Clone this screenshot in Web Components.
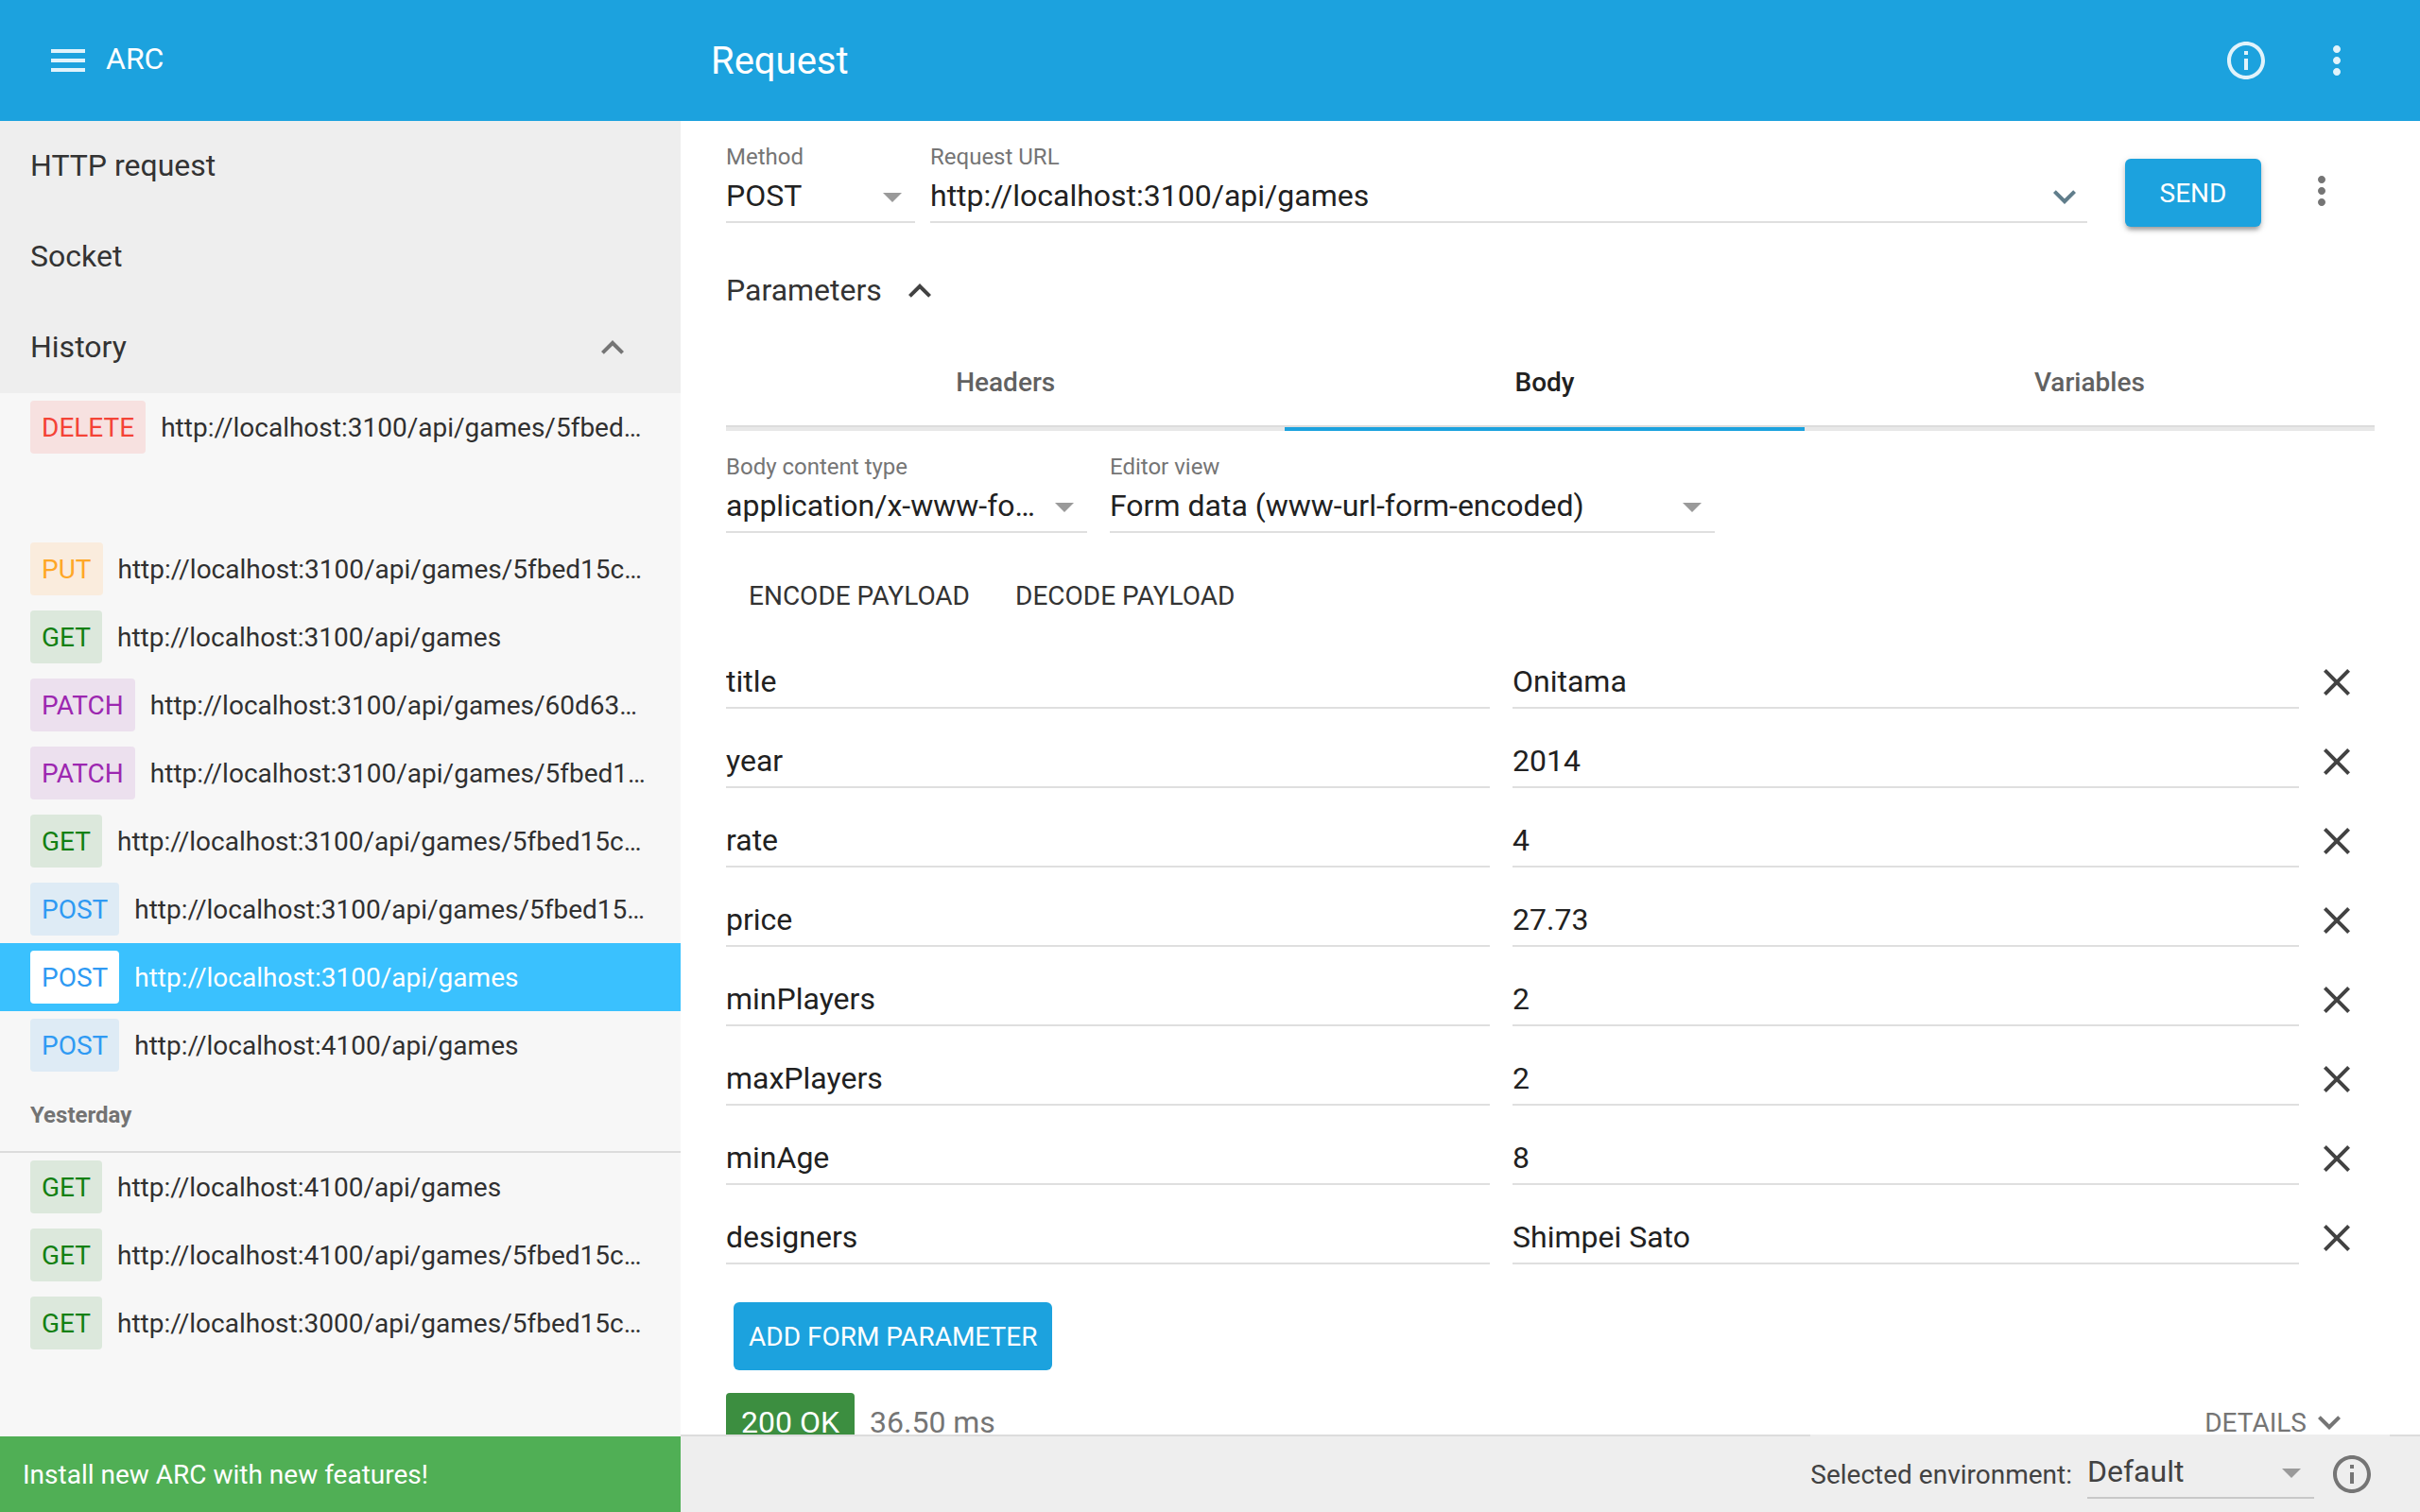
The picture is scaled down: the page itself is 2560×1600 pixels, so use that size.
<!DOCTYPE html>
<html lang="en">
<head>
<meta charset="utf-8">
<title>ARC - Request</title>
<style>
  html, body { margin: 0; height: 100%; }
  body {
    --primary: #1ca2de;
    --line: #dfdfdf;
    --muted: #757575;
    font-family: Roboto, "Liberation Sans", sans-serif;
    font-size: 32px;
    color: #212121;
    background: #fff;
    overflow: hidden;
  }
</style>
</head>
<body>
<arc-app></arc-app>

<script>
const ICONS = {
  menu: 'M3 18h18v-2H3v2zm0-5h18v-2H3v2zm0-7v2h18V6H3z',
  info: 'M11 17h2v-6h-2v6zm1-15C6.48 2 2 6.48 2 12s4.48 10 10 10 10-4.48 10-10S17.52 2 12 2zm0 18c-4.41 0-8-3.59-8-8s3.59-8 8-8 8 3.59 8 8-3.59 8-8 8zM11 9h2V7h-2v2z',
  more: 'M12 8c1.1 0 2-.9 2-2s-.9-2-2-2-2 .9-2 2 .9 2 2 2zm0 2c-1.1 0-2 .9-2 2s.9 2 2 2 2-.9 2-2-.9-2-2-2zm0 6c-1.1 0-2 .9-2 2s.9 2 2 2 2-.9 2-2-.9-2-2-2z',
  less: 'M12 8l-6 6 1.41 1.41L12 10.83l4.59 4.58L18 14z',
  expand: 'M16.59 8.59L12 13.17 7.41 8.59 6 10l6 6 6-6z',
  drop: 'M7 10l5 5 5-5z',
  close: 'M19 6.41L17.59 5 12 10.59 6.41 5 5 6.41 10.59 12 5 17.59 6.41 19 12 13.41 17.59 19 19 17.59 13.41 12z'
};

const RESET = `
  *, *::before, *::after { box-sizing: border-box; }
  button, input, select {
    font: inherit; color: inherit; background: none; border: 0; margin: 0; padding: 0;
    border-radius: 0; outline: 0; appearance: none;
  }
  button { cursor: pointer; }
  a { color: inherit; text-decoration: none; }
`;

class ArcElement extends HTMLElement {
  connectedCallback() {
    if (this.shadowRoot) return;
    const root = this.attachShadow({ mode: 'open' });
    root.innerHTML = `<style>${RESET}${this.styles()}</style>${this.markup()}`;
  }
  attr(name) { return this.getAttribute(name) || ''; }
  styles() { return ''; }
  markup() { return '<slot></slot>'; }
}

customElements.define('arc-icon', class extends ArcElement {
  styles() { return `
    :host { display: block; flex: none; width: 48px; height: 48px; }
    svg { display: block; width: 100%; height: 100%; fill: currentColor; }`; }
  markup() { return `<svg viewBox="0 0 24 24" aria-hidden="true"><path d="${ICONS[this.attr('name')]}"/></svg>`; }
});

customElements.define('arc-icon-button', class extends ArcElement {
  styles() { return `
    :host { display: block; flex: none; }
    button { display: block; padding: 16px; }`; }
  markup() { return `<button type="button" aria-label="${this.attr('label')}"><arc-icon name="${this.attr('icon')}"></arc-icon></button>`; }
});

customElements.define('arc-button', class extends ArcElement {
  styles() { return `
    :host { display: block; flex: none; font-size: 28px; color: #333; }
    button { display: block; width: 100%; height: 72px; padding: 0 16px; border-radius: 6px; text-transform: uppercase; white-space: nowrap; }
    :host([filled]) button { background: var(--primary); color: #fff; }
    :host([raised]) button { box-shadow: 0 4px 4px rgba(0,0,0,.16), 0 2px 8px rgba(0,0,0,.14), 0 6px 4px -4px rgba(0,0,0,.2); }`; }
  markup() { return `<button type="button"><slot></slot></button>`; }
});

const FIELD = `
  :host { display: block; min-width: 0; }
  label { display: block; font-size: 24px; line-height: 32px; color: var(--muted); white-space: nowrap; }
  .box { display: grid; padding-bottom: 2px; border-bottom: 2px solid var(--field-line, var(--line)); }
  .box > * { grid-area: 1 / 1; }
  input, select { display: block; width: 100%; min-width: 0; height: 50px; }
  .icon { justify-self: end; align-self: end; pointer-events: none; }
`;

customElements.define('arc-select', class extends ArcElement {
  styles() { return FIELD + `
    select { padding-right: 48px; overflow: hidden; text-overflow: ellipsis; white-space: nowrap; }
    .icon { color: #9a9a9a; }`; }
  markup() {
    const label = this.attr('label');
    return `${label ? `<label for="s">${label}</label>` : ''}
      <div class="box"><select id="s" ${label ? '' : `aria-label="${this.attr('name')}"`}><option>${this.attr('value')}</option></select>
      <arc-icon class="icon" name="drop"></arc-icon></div>`;
  }
});

customElements.define('arc-input', class extends ArcElement {
  styles() { return FIELD + `.icon { color: #607d8b; }`; }
  markup() {
    const label = this.attr('label'), icon = this.attr('icon');
    return `${label ? `<label for="i">${label}</label>` : ''}
      <div class="box"><input id="i" type="text" value="${this.attr('value')}" ${label ? '' : `aria-label="${this.attr('name')}"`}>
      ${icon ? `<arc-icon class="icon" name="${icon}"></arc-icon>` : ''}</div>`;
  }
});

customElements.define('arc-header', class extends ArcElement {
  styles() { return `
    :host { display: flex; align-items: center; height: 128px; background: var(--primary); color: #fff; }
    .brand { display: flex; align-items: center; flex: none; width: var(--drawer); padding-left: 32px; }
    .brand span { line-height: 48px; padding-bottom: 4px; }
    h1 { flex: 1; margin: 0; padding-left: 32px; font-size: 40px; font-weight: 400; }
    .actions { display: flex; gap: 16px; padding-right: 48px; }
    arc-icon-button { color: rgba(255,255,255,.87); }`; }
  markup() { return `
    <div class="brand"><arc-icon-button icon="menu" label="Menu"></arc-icon-button><span>ARC</span></div>
    <h1>Request</h1>
    <div class="actions">
      <arc-icon-button icon="info" label="About"></arc-icon-button>
      <arc-icon-button icon="more" label="More options"></arc-icon-button>
    </div>`; }
});

customElements.define('arc-nav-item', class extends ArcElement {
  styles() { return `
    :host { display: block; background: #eee; color: #333; }
    a { display: flex; align-items: center; justify-content: space-between; height: 96px; padding: 0 48px 0 32px; }
    span { padding-bottom: 2px; }
    arc-icon { color: #757575; }`; }
  markup() { return `<a href="#"><span><slot></slot></span>${this.hasAttribute('open') ? '<arc-icon name="less"></arc-icon>' : ''}</a>`; }
});

customElements.define('arc-history-item', class extends ArcElement {
  styles() { return `
    :host { display: block; font-size: 28px; color: #303030; }
    a { display: flex; align-items: center; gap: 16px; height: 72px; padding: 0 32px; }
    .method { flex: none; padding: 2px 12px 0; line-height: 54px; border-radius: 4px; }
    .url { min-width: 0; overflow: hidden; text-overflow: ellipsis; white-space: nowrap; }
    .GET { background: #dce8dc; color: #128012; }
    .POST { background: #deebf5; color: #2f9af3; }
    .PUT { background: #faecdd; color: #ffa726; }
    .PATCH { background: #ece0ee; color: #9c27b0; }
    .DELETE { background: #f7e1e0; color: #f44336; }
    :host([selected]) { background: #3ac1fe; color: #fff; }
    :host([selected]) .method { background: #fff; }`; }
  markup() {
    const m = this.attr('method');
    return `<a href="#"><span class="method ${m}">${m}</span><span class="url"><slot></slot></span></a>`;
  }
});

customElements.define('arc-drawer', class extends ArcElement {
  styles() { return `
    :host { display: flex; flex-direction: column; min-height: 0; background: #f7f7f7; }
    nav { flex: 1; min-height: 0; overflow: hidden; }
    h2 { margin: 0; padding: 0 32px; height: 78px; line-height: 76px; font-size: 24px; font-weight: 700; color: #737373; border-bottom: 2px solid #dcdcdc; }
    h2.blank { border-color: transparent; }
    .promo { flex: none; display: block; padding: 2px 24px 0; line-height: 78px; font-size: 28px; background: #50af55; color: #fff; }`; }
  markup() {
    const row = (m, u, s) => `<arc-history-item method="${m}" ${s ? 'selected' : ''}>http://localhost:${u}</arc-history-item>`;
    return `
    <nav>
      <arc-nav-item>HTTP request</arc-nav-item>
      <arc-nav-item>Socket</arc-nav-item>
      <arc-nav-item open>History</arc-nav-item>
      ${row('DELETE', '3100/api/games/5fbed…')}
      <h2 class="blank"></h2>
      ${row('PUT', '3100/api/games/5fbed15c…')}
      ${row('GET', '3100/api/games')}
      ${row('PATCH', '3100/api/games/60d63…')}
      ${row('PATCH', '3100/api/games/5fbed1…')}
      ${row('GET', '3100/api/games/5fbed15c…')}
      ${row('POST', '3100/api/games/5fbed15…')}
      ${row('POST', '3100/api/games', true)}
      ${row('POST', '4100/api/games')}
      <h2>Yesterday</h2>
      ${row('GET', '4100/api/games')}
      ${row('GET', '4100/api/games/5fbed15c…')}
      ${row('GET', '3000/api/games/5fbed15c…')}
    </nav>
    <a class="promo" href="#">Install new ARC with new features!</a>`;
  }
});

customElements.define('arc-tabs', class extends ArcElement {
  styles() { return `
    :host { display: flex; font-size: 28px; font-weight: 500; color: #616161; }
    button { flex: 1 1 auto; height: 98px; padding-bottom: 2px; border-bottom: 4px solid #e8e8e8; box-shadow: inset 0 -2px #dcdcdc; }
    button[aria-selected=true] { color: #212121; border-color: var(--primary); }`; }
  markup() {
    return this.attr('tabs').split(',').map(t =>
      `<button type="button" role="tab" aria-selected="${t === this.attr('selected')}">${t}</button>`).join('');
  }
});

customElements.define('arc-form-row', class extends ArcElement {
  styles() { return `
    :host { display: flex; align-items: center; height: 84px; }
    .pair { flex: 1; display: grid; grid-template-columns: 1fr 1fr; padding-top: 2px; }
    .key { padding-right: 24px; }
    arc-icon-button { color: #424242; }`; }
  markup() { return `
    <div class="pair">
      <arc-input class="key" name="Parameter name" value="${this.attr('name')}"></arc-input>
      <arc-input name="Parameter value" value="${this.attr('value')}"></arc-input>
    </div>
    <arc-icon-button icon="close" label="Remove parameter"></arc-icon-button>`; }
});

customElements.define('arc-request', class extends ArcElement {
  styles() { return `
    :host { display: block; min-height: 0; overflow: hidden; padding: 22px 48px 0; }
    .line { display: flex; align-items: flex-end; height: 92px; padding-right: 16px; }
    .line arc-select { flex: none; width: 200px; margin: 0 16px 6px 0; }
    .line arc-input { flex: 1; margin-bottom: 6px; }
    .line arc-button { width: 144px; margin: 0 24px 2px 40px; }
    .line arc-icon-button { color: #757575; }
    .params { display: flex; align-items: center; gap: 16px; height: 48px; margin-top: 42px; color: #333; }
    .params span { padding-bottom: 2px; }
    .params arc-icon { color: #424242; }
    arc-tabs { margin-top: 26px; }
    .selects { display: grid; grid-template-columns: 382px 640px; gap: 24px; margin-top: 22px; }
    .payload { display: flex; gap: 16px; padding-left: 8px; margin-top: 30px; }
    .rows { margin-top: 14px; }
    .add { display: flex; padding-left: 8px; margin-top: 26px; }
    .status { display: flex; align-items: center; margin-top: 24px; line-height: 62px; color: var(--muted); }
    .code { padding: 0 16px; margin-right: 16px; border-radius: 4px; background: #3c8e40; color: #fff; }
    .details { display: flex; align-items: center; height: 62px; margin: 0 24px 0 auto; font-size: 28px; }
    .details span { padding-top: 2px; }`; }
  markup() {
    const rows = [['title', 'Onitama'], ['year', '2014'], ['rate', '4'], ['price', '27.73'], ['minPlayers', '2'],
      ['maxPlayers', '2'], ['minAge', '8'], ['designers', 'Shimpei Sato']];
    return `
    <div class="line">
      <arc-select label="Method" value="POST"></arc-select>
      <arc-input label="Request URL" value="http://localhost:3100/api/games" icon="expand"></arc-input>
      <arc-button filled raised>Send</arc-button>
      <arc-icon-button icon="more" label="Request options"></arc-icon-button>
    </div>
    <button class="params" type="button"><span>Parameters</span><arc-icon name="less"></arc-icon></button>
    <arc-tabs role="tablist" tabs="Headers,Body,Variables" selected="Body"></arc-tabs>
    <div class="selects">
      <arc-select label="Body content type" value="application/x-www-form-urlencoded"></arc-select>
      <arc-select label="Editor view" value="Form data (www-url-form-encoded)"></arc-select>
    </div>
    <div class="payload"><arc-button>Encode payload</arc-button><arc-button>Decode payload</arc-button></div>
    <div class="rows">${rows.map(([k, v]) => `<arc-form-row name="${k}" value="${v}"></arc-form-row>`).join('')}</div>
    <div class="add"><arc-button filled>Add form parameter</arc-button></div>
    <div class="status"><span class="code">200 OK</span><span>36.50 ms</span>
      <button class="details" type="button"><span>DETAILS</span><arc-icon name="expand"></arc-icon></button></div>`;
  }
});

customElements.define('arc-environment', class extends ArcElement {
  styles() { return `
    :host { display: flex; justify-content: flex-end; flex: none; height: 82px; padding-right: 32px; border-top: 2px solid #dcdcdc; background: #eee; color: #424242; }
    .bar { display: flex; align-items: center; margin-top: -2px; background: #eee; }
    .bar > span { font-size: 28px; padding-top: 2px; margin-right: 16px; }
    arc-select { width: 240px; --field-line: #c8c8c8; }
    arc-icon-button { color: #757575; padding-top: 2px; }`; }
  markup() { return `
    <div class="bar"><span>Selected environment:</span>
      <arc-select name="Selected environment" value="Default"></arc-select>
      <arc-icon-button icon="info" label="Environment details"></arc-icon-button></div>`; }
});

customElements.define('arc-app', class extends ArcElement {
  styles() { return `
    :host { --drawer: 720px; display: flex; flex-direction: column; height: 100vh; }
    .content { flex: 1; min-height: 0; display: grid; grid-template-columns: var(--drawer) minmax(0, 1fr); grid-template-rows: minmax(0, 1fr); }
    main { display: flex; flex-direction: column; min-height: 0; }
    arc-request { flex: 1; }`; }
  markup() { return `
    <arc-header></arc-header>
    <div class="content">
      <arc-drawer></arc-drawer>
      <main><arc-request></arc-request><arc-environment></arc-environment></main>
    </div>`; }
});
</script>
</body>
</html>
